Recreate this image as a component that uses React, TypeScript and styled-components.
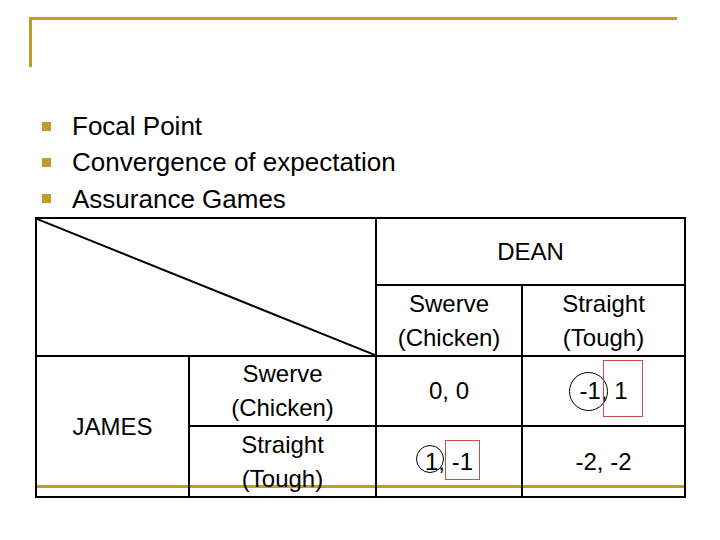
import React from "react";
import styled, { createGlobalStyle } from "styled-components";

const gold = "#c09c2c";

const Global = createGlobalStyle`
  html, body { margin: 0; padding: 0; background: #fff; }
  body { font-family: "Liberation Sans", Arial, sans-serif; color: #000; }
`;

const Slide = styled.div`
  width: 720px;
  height: 540px;
  background: #fff;
  overflow: hidden;
  display: flex;
  flex-direction: column;
`;

const TitleCorner = styled.div`
  margin: 17px 0 0 29px;
  width: 648px;
  height: 50px;
  box-sizing: border-box;
  border-top: 3px solid ${gold};
  border-left: 3px solid ${gold};
`;

const BulletList = styled.ul`
  list-style: none;
  margin: 41px 0 0 0;
  padding: 0 0 0 42px;
`;

const BulletItem = styled.li`
  display: flex;
  align-items: center;
  gap: 21px;
  height: 36.4px;
  font-size: 26px;
  line-height: 36.4px;
  white-space: nowrap;
`;

const Square = styled.span`
  width: 9px;
  height: 9px;
  background: ${gold};
  flex: none;
`;

const TableWrap = styled.div`
  position: relative;
  margin-left: 35px;
  width: 651px;
`;

const GoldRule = styled.div`
  position: absolute;
  left: 2px;
  right: 2px;
  top: 268px;
  height: 3px;
  background: ${gold};
`;

const Grid = styled.div`
  position: relative;
  display: grid;
  grid-template-columns: 153px 187px 146px 163px;
  grid-template-rows: 67px 71px 70px 71px;
  border-top: 2px solid #000;
  border-left: 2px solid #000;
  font-size: 24px;
  line-height: 34px;
`;

const Cell = styled.div<{ $col: string; $row: string }>`
  grid-column: ${(p) => p.$col};
  grid-row: ${(p) => p.$row};
  position: relative;
  box-sizing: border-box;
  border-right: 2px solid #000;
  border-bottom: 2px solid #000;
  display: flex;
  flex-direction: column;
  align-items: center;
  justify-content: center;
  text-align: center;
  white-space: nowrap;
`;

const Diagonal = styled.svg`
  position: absolute;
  inset: 0;
  width: 100%;
  height: 100%;
`;

const Ring = styled.span<{ $x: number; $y: number; $d: number }>`
  position: absolute;
  left: ${(p) => p.$x}px;
  top: ${(p) => p.$y}px;
  width: ${(p) => p.$d}px;
  height: ${(p) => p.$d}px;
  box-sizing: border-box;
  border: 1px solid #000;
  border-radius: 50%;
`;

const Mark = styled.span<{ $x: number; $y: number; $w: number; $h: number }>`
  position: absolute;
  left: ${(p) => p.$x}px;
  top: ${(p) => p.$y}px;
  width: ${(p) => p.$w}px;
  height: ${(p) => p.$h}px;
  box-sizing: border-box;
  border: 1px solid #c0504d;
`;

const bullets = ["Focal Point", "Convergence of expectation", "Assurance Games"];

export default function App() {
  return (
    <>
      <Global />
      <Slide>
        <TitleCorner />
        <BulletList>
          {bullets.map((b) => (
            <BulletItem key={b}>
              <Square />
              {b}
            </BulletItem>
          ))}
        </BulletList>
        <TableWrap>
          <GoldRule />
          <Grid>
            <Cell $col="1 / 3" $row="1 / 3">
              <Diagonal viewBox="0 0 100 100" preserveAspectRatio="none">
                <line x1="0" y1="0" x2="100" y2="100" stroke="#000" strokeWidth="2" vectorEffect="non-scaling-stroke" />
              </Diagonal>
            </Cell>
            <Cell $col="3 / 5" $row="1">DEAN</Cell>
            <Cell $col="3" $row="2">
              <span>Swerve</span>
              <span>(Chicken)</span>
            </Cell>
            <Cell $col="4" $row="2">
              <span>Straight</span>
              <span>(Tough)</span>
            </Cell>
            <Cell $col="1" $row="3 / 5">JAMES</Cell>
            <Cell $col="2" $row="3">
              <span>Swerve</span>
              <span>(Chicken)</span>
            </Cell>
            <Cell $col="2" $row="4">
              <span>Straight</span>
              <span>(Tough)</span>
            </Cell>
            <Cell $col="3" $row="3">0, 0</Cell>
            <Cell $col="4" $row="3">
              -1, 1
              <Ring $x={46} $y={15} $d={39} />
              <Mark $x={80} $y={3} $w={40} $h={57} />
            </Cell>
            <Cell $col="3" $row="4">
              1, -1
              <Ring $x={39} $y={18} $d={28} />
              <Mark $x={68} $y={13} $w={35} $h={40} />
            </Cell>
            <Cell $col="4" $row="4">-2, -2</Cell>
          </Grid>
        </TableWrap>
      </Slide>
    </>
  );
}
